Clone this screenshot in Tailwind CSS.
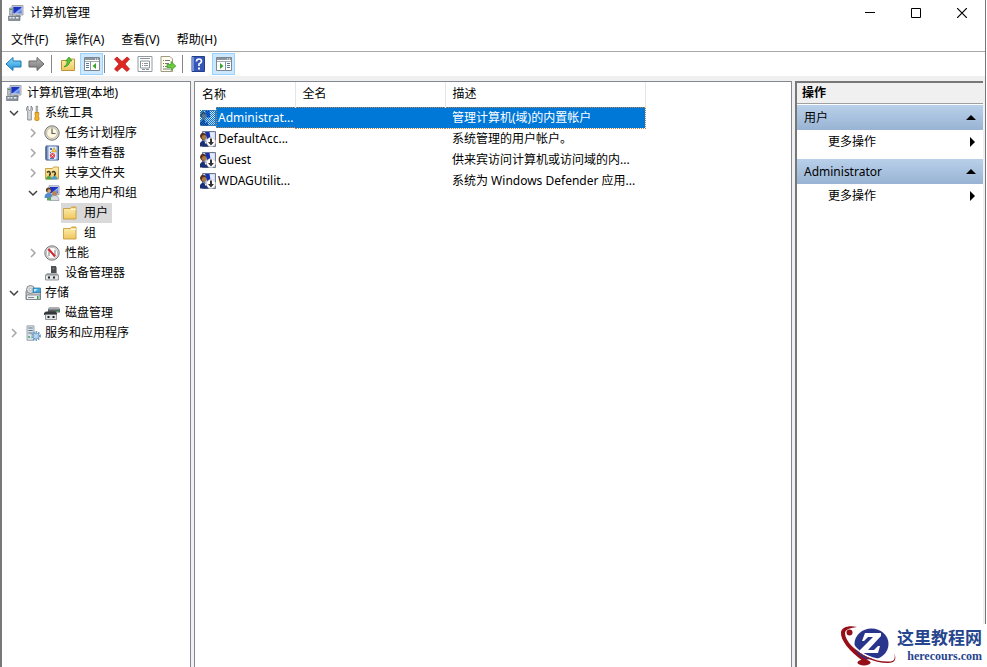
<!DOCTYPE html>
<html lang="zh-CN">
<head>
<meta charset="utf-8">
<meta name="viewport" content="width=device-width, initial-scale=1">
<title>计算机管理</title>
<script src="https://cdn.jsdelivr.net/npm/@tailwindcss/browser@4"></script>
</head>
<body class="h-screen overflow-hidden bg-white font-['Noto_Sans','Noto_Sans_CJK_SC',sans-serif] text-[12px] leading-[20px] text-black">

<svg class="absolute size-0" aria-hidden="true">
  <defs>
    <linearGradient id="gBlue" x1="0" y1="0" x2="1" y2="1"><stop offset="0" stop-color="#1c2fb8"/><stop offset=".5" stop-color="#1b35c8"/><stop offset=".6" stop-color="#8fb0f2"/><stop offset="1" stop-color="#3c5fd8"/></linearGradient>
    <linearGradient id="gFolder" x1="0" y1="0" x2="0" y2="1"><stop offset="0" stop-color="#fdeeb0"/><stop offset="1" stop-color="#efc75e"/></linearGradient>
    <linearGradient id="gArrow" x1="0" y1="0" x2="0" y2="1"><stop offset="0" stop-color="#8fdcff"/><stop offset="1" stop-color="#1b8fd6"/></linearGradient>
    <linearGradient id="gGray" x1="0" y1="0" x2="0" y2="1"><stop offset="0" stop-color="#b5b5b5"/><stop offset="1" stop-color="#777777"/></linearGradient>
    <pattern id="dither" width="2" height="2" patternUnits="userSpaceOnUse"><path d="M0 0h1v1H0zM1 1h1v1H1z" fill="#0078d7"/></pattern>
  </defs>
  <symbol id="computer" viewBox="0 0 16 16">
    <path d="M4 .5h11v9.500H4z" fill="#d9dce2" stroke="#8b8f98" stroke-width=".8"/>
    <path d="M5.300 1.800h8.400v6.700H5.300z" fill="url(#gBlue)"/>
    <path d="M8 10h4l1 2H7z" fill="#9aa0aa"/>
    <path d="M1.500 3h3v7h-3z" fill="#b9c0ca" stroke="#77808c" stroke-width=".6"/>
    <path d="M.5 11h11.500v4.500H.5z" fill="#87909b" stroke="#5e6670" stroke-width=".6"/>
    <path d="M1.500 12h2v1.500h-2zM4.500 12h2v1.500h-2zM8 12h2.500v1.500H8z" fill="#e9edf1"/>
    <path d="M2 4h2v1H2z" fill="#38a83c"/>
  </symbol>
  <symbol id="tools" viewBox="0 0 16 16">
    <path d="M3 1v3.500l1.500 1L6 4.500V1c2 1 2 4.500.3 5.800V15H2.700V6.800C1 5.500 1 2 3 1z" fill="#d7d9dc" stroke="#74777c" stroke-width=".8"/>
    <path d="M11 1h1.600v7H11z" fill="#b6babf" stroke="#777" stroke-width=".5"/>
    <path d="M10 7.500h3.800V10l-.7 1 .9 1.500v2.300l-1 .7h-2.200l-1-.7v-2.300l.8-1.500-.6-1z" fill="#f3b229" stroke="#c17a0a" stroke-width=".7"/>
  </symbol>
  <symbol id="clock" viewBox="0 0 16 16">
    <circle cx="8" cy="8" r="7.200" fill="#dcdad2" stroke="#77756e"/>
    <circle cx="8" cy="8" r="5.400" fill="#fff6dc" stroke="#b6b2a0" stroke-width=".8"/>
    <path d="M8 3.500V8.500h3.500" fill="none" stroke="#51606f" stroke-width="1.200"/>
  </symbol>
  <symbol id="event" viewBox="0 0 16 16">
    <path d="M2 1h12.500v14H2z" fill="#7fa0d8" stroke="#3e5c96"/>
    <path d="M4.500 1.500h8v13h-8z" fill="#e6edf9"/>
    <path d="M6 3h2v2H6zM6 7h1v1H6zM6 13h4v1H6z" fill="#5377bd"/>
    <path d="M10 2.500l2.500 4.500h-5z" fill="#f5c842" stroke="#b88a18" stroke-width=".5"/>
    <circle cx="8.500" cy="10.500" r="2.600" fill="#e04655"/><path d="M7.500 9.500l2 2m0-2l-2 2" stroke="#fff" stroke-width=".8"/>
    <path d="M1 3h2M1 5h2M1 7h2M1 9h2M1 11h2M1 13h2" stroke="#555"/>
  </symbol>
  <symbol id="folder" viewBox="0 0 16 16">
    <path d="M1.500 3.500h7l1-1.500h4.500v12H1.500z" fill="url(#gFolder)" stroke="#c79b3d" stroke-width=".9"/>
    <path d="M9 4.500h5" stroke="#fff7cf"/><path d="M10 2.500h3" stroke="#e3a83d"/>
  </symbol>
  <symbol id="shared" viewBox="0 0 16 16">
    <path d="M1.500 3.500h7l1-1.500h5v12h-13z" fill="url(#gFolder)" stroke="#c79b3d" stroke-width=".9"/>
    <path d="M3 7.500q2-2 3 0t-1 3M8 7.500q2-2 3 0t-1 3" fill="none" stroke="#3f3b23" stroke-width="1.500"/>
    <path d="M2 14.500q0-3.500 3-3.500t3 3.500z" fill="#4ea454"/><path d="M7.500 14.500q0-3.500 3-3.500t3 3.500z" fill="#4c9ecb"/>
  </symbol>
  <symbol id="users" viewBox="0 0 16 16">
    <path d="M5 .8h10v9H5z" fill="#dce2ee" stroke="#7e8ba6" stroke-width=".8"/><path d="M6 2h8v6.500H6z" fill="url(#gBlue)"/>
    <circle cx="4.500" cy="5" r="2.600" fill="#604424"/><circle cx="5.200" cy="6" r="1.800" fill="#d9a878"/>
    <path d="M.5 13q0-5 4-5t4 5z" fill="#5289cf"/>
    <circle cx="10.500" cy="8.500" r="2.500" fill="#b98652"/><path d="M6 15.500q0-5 4.500-5t4.500 5z" fill="#d8dde1" stroke="#7c8790" stroke-width=".6"/>
    <path d="M3 12.500h4v3H3z" fill="#5da35d"/>
  </symbol>
  <symbol id="perf" viewBox="0 0 16 16">
    <circle cx="8" cy="8" r="7.200" fill="#deded9" stroke="#777"/><circle cx="8" cy="8" r="5.600" fill="#fff" stroke="#aaa" stroke-width=".7"/>
    <path d="M5 11V5l6 6V5" fill="none" stroke="#555" stroke-width=".8"/><path d="M4.500 4l6.500 7.500" stroke="#d2222b" stroke-width="2"/>
  </symbol>
  <symbol id="device" viewBox="0 0 16 16">
    <path d="M7 1h5v8H7z" fill="#4a4d50"/><path d="M8.500 2.500h2v2h-2z" fill="#777"/><path d="M12 2h1v7h-1z" fill="#999"/>
    <path d="M3 8h10l1.500 2H1.500z" fill="#aab0b3"/><path d="M1.500 10h13v5h-13z" fill="#e2e5e6" stroke="#787e82" stroke-width=".8"/>
    <path d="M4 11.500h2v2H4zM9 11.500h2v2H9z" fill="#222"/>
  </symbol>
  <symbol id="storage" viewBox="0 0 16 16">
    <path d="M1 6l2-2h10l2.500 2v8.500H1z" fill="#c7cbd0" stroke="#666d75" stroke-width=".8"/>
    <circle cx="5.500" cy="4.500" r="4" fill="#d9dde1" stroke="#888"/><circle cx="5.500" cy="4.500" r="1.200" fill="#fff" stroke="#888" stroke-width=".5"/>
    <path d="M8 3h7.500v4.500H8z" fill="#42a6dd" stroke="#28709b" stroke-width=".7"/><path d="M9 4h4l-3 2.500H9z" fill="#bce9ff"/>
    <path d="M1.500 10h13.500v4.500H1.500z" fill="#eceff1" stroke="#6d747c" stroke-width=".7"/><path d="M3 12.500h6" stroke="#888"/><path d="M12 11h1.500v3H12z" fill="#28a745"/>
  </symbol>
  <symbol id="disk" viewBox="0 0 16 16">
    <path d="M5 2.500h10l1 2v3H4v-3z" fill="#5c6064"/><path d="M5 3h10v1.500H4.500z" fill="#a8adb1"/>
    <path d="M2 6.500h9l2 1.500v2H0V8z" fill="#33373a"/><path d="M1.500 9.500h11v5h-11z" fill="#e2e5e6" stroke="#777d81" stroke-width=".8"/>
    <path d="M3.500 11h2v2h-2zM8.500 11h2v2h-2z" fill="#222"/><path d="M12.500 6h2v1h-2z" fill="#37c44a"/>
  </symbol>
  <symbol id="services" viewBox="0 0 16 16">
    <path d="M2 .8h7v14.500H2z" fill="#dbe2e8" stroke="#8796a4" stroke-width=".8"/><path d="M3.300 3h4.500M3.300 5.500h4.500M3.300 8h4.500" stroke="#5d7488"/><path d="M3.300 11h1.500v2H3.300z" fill="#43a84f"/>
    <circle cx="11" cy="11" r="3.900" fill="none" stroke="#6d9dc7" stroke-width="2" stroke-dasharray="1.500 1"/><circle cx="11" cy="11" r="3" fill="#b9d7ee" stroke="#6797bf" stroke-width=".8"/><circle cx="11" cy="11" r="1.200" fill="#fff" stroke="#6797bf" stroke-width=".5"/>
  </symbol>
  <symbol id="user" viewBox="0 0 16 16">
    <path d="M2.500.5h13v15h-13z" fill="#c3cfee" stroke="#6f7890"/><path d="M8 1.500h6.500v7H8z" fill="#e3eafa"/>
    <path d="M5 1h4.500l1 6-3.500 1z" fill="#1630b0"/>
    <path d="M0 4.500q1-3.500 4-2.500t2 4L4 9.500Q0 8 0 4.500z" fill="#553017"/><circle cx="4.200" cy="6.500" r="2.400" fill="#a87a4a"/>
    <path d="M0 15.500V12q1-2.500 4-2.500t4 4v2z" fill="#1a2f74"/><path d="M4.500 10l1 3 1.500-2z" fill="#fff"/>
  </symbol>
  <symbol id="disabled" viewBox="0 0 16 16">
    <use href="#user"/><circle cx="11" cy="11" r="4.500" fill="#fff" stroke="#c8c8c8" stroke-width=".7"/><path d="M10 7.500h2V11h2l-3 3.500L8 11h2z" fill="#333"/>
  </symbol>
  <symbol id="open" viewBox="0 0 12 12"><path d="M2 4l4 4 4-4" fill="none" stroke="#404040" stroke-width="1.500"/></symbol>
  <symbol id="closed" viewBox="0 0 12 12"><path d="M4 2l4 4-4 4" fill="none" stroke="#a6a6a6" stroke-width="1.500"/></symbol>
  <symbol id="pane" viewBox="0 0 16 16">
    <path d="M.5 1.500h15v13H.5z" fill="#fff" stroke="#7d8790"/><path d="M1 2h14v2H1z" fill="#8b959e"/><path d="M11 2.500h1v1h-1zM13 2.500h1v1h-1z" fill="#fff"/><path d="M1 5.500h14" stroke="#a5adb3"/>
  </symbol>
</svg>

<div class="flex h-full flex-col border-l-2 border-[#777] pr-px">
 <div class="flex min-h-0 flex-1 flex-col border-r border-[#777]">
  <header class="flex h-[26px] shrink-0 items-center pl-[6px]">
    <svg class="size-4"><use href="#computer"/></svg>
    <h1 class="ml-[6px] flex-1">计算机管理</h1>
    <div class="flex h-full">
      <button aria-label="最小化" class="grid w-[46px] place-items-center"><svg class="h-[10px] w-[10px]" viewBox="0 0 10 10"><path d="M0 4.500h10" stroke="#000"/></svg></button>
      <button aria-label="最大化" class="grid w-[46px] place-items-center"><svg class="h-[10px] w-[10px]" viewBox="0 0 10 10"><path d="M.5.5h9v9h-9z" fill="none" stroke="#000"/></svg></button>
      <button aria-label="关闭" class="grid w-[46px] place-items-center"><svg class="h-[10px] w-[10px]" viewBox="0 0 10 10"><path d="M0 0l10 10M10 0L0 10" stroke="#000" stroke-width="1.200"/></svg></button>
    </div>
  </header>

  <nav aria-label="菜单" class="flex h-[26px] shrink-0 items-center gap-[17px] border-b border-[#a8a8a8] pt-[3px] pl-[9px]">
    <button>文件(F)</button><button>操作(A)</button><button>查看(V)</button><button>帮助(H)</button>
  </nav>

  <div role="toolbar" aria-label="工具栏" class="flex h-6 shrink-0 items-center pl-[3px]">
    <button aria-label="后退" class="grid h-[22px] w-[23px] place-items-center pr-[6px]"><svg class="h-4 w-[17px]" viewBox="0 0 17 16"><path d="M1 8l7-6.500V5h8v6H8v3.500z" fill="url(#gArrow)" stroke="#1878b4"/></svg></button>
    <button aria-label="前进" class="grid h-[22px] w-[23px] place-items-center pr-[6px]"><svg class="h-4 w-[17px]" viewBox="0 0 17 16"><path d="M16 8L9 1.500V5H1v6h8v3.500z" fill="url(#gGray)" stroke="#666"/></svg></button>
    <span class="mr-1 h-[18px] w-px bg-[#858585]"></span>
    <button aria-label="上一级" class="grid h-[22px] w-6 place-items-center"><svg class="size-4" viewBox="0 0 16 16"><path d="M1.500 4.500h6l1-1.500h6v11.500h-13z" fill="url(#gFolder)" stroke="#c29238"/><path d="M4 11q3-2 3.500-6H5.500L9 1l3 4h-2q-.5 5-6 6z" fill="#55c52f" stroke="#2d8a18" stroke-width=".6"/></svg></button>
    <button aria-label="显示/隐藏控制台树" aria-pressed="true" class="grid h-[22px] w-[23px] place-items-center border border-[#99d1ff] bg-[#cce8ff]"><svg class="size-4" viewBox="0 0 16 16"><use href="#pane"/><path d="M6.500 5.500v9" stroke="#8a949c"/><path d="M2 7.500h3M2 9.500h3M2 11.500h3" stroke="#56799b"/><path d="M12 7v6L8.500 10z" fill="#3aa52a"/></svg></button>
    <span class="mr-[5px] ml-px h-[18px] w-px bg-[#858585]"></span>
    <button aria-label="删除" class="grid h-[22px] w-[23px] place-items-center"><svg class="size-4" viewBox="0 0 16 16"><path d="M3 1l5 4.500L13 1l2.500 2-4.500 5 4.500 5-2.500 2.500L8 11l-5 4.500L.5 13 5 8 .5 3z" fill="#df2824" stroke="#b31513" stroke-width=".7"/></svg></button>
    <button aria-label="属性" class="grid h-[22px] w-[23px] place-items-center"><svg class="size-4" viewBox="0 0 16 16"><path d="M1 .5h14v15H1z" fill="#fff" stroke="#949a9f"/><path d="M3 2.500h10M3.500 5h9v7h-9zM5 7.500h1M7 7.500h4M5 9.500h1M7 9.500h4M5 13.500h3M9 13.500h3" fill="none" stroke="#8a929a"/></svg></button>
    <button aria-label="导出列表" class="grid h-[22px] w-[23px] place-items-center"><svg class="size-4" viewBox="0 0 16 16"><path d="M1 .5h9l2.500 2.500v12.500H1z" fill="#fffdf0" stroke="#a09a80"/><path d="M3 4.500h1M5 4.500h5M3 7.500h1M5 7.500h4M3 10.500h1M5 10.500h3M3 13h7" stroke="#777"/><path d="M7 8.500h4V5.500l4.800 4.500-4.800 4.500V11.500H7z" fill="#69cc3f" stroke="#379321" stroke-width=".7"/></svg></button>
    <span class="mr-1 ml-[3px] h-[18px] w-px bg-[#858585]"></span>
    <button aria-label="帮助" class="grid h-[22px] w-[25px] place-items-center pr-[3px]"><svg class="size-4" viewBox="0 0 16 16"><path d="M2 .5h12.500v15H2z" fill="#3456b8" stroke="#253e87"/><path d="M2 1h2v14H2z" fill="#7892d8"/><path d="M6.500 5.500q0-2.500 2.500-2.500t2.500 2.200Q11.500 7 9 8v2" fill="none" stroke="#fff" stroke-width="1.700"/><path d="M8 11.500h2v2H8z" fill="#fff"/></svg></button>
    <button aria-label="显示/隐藏操作窗格" aria-pressed="true" class="grid h-[22px] w-[23px] place-items-center border border-[#99d1ff] bg-[#cce8ff]"><svg class="size-4" viewBox="0 0 16 16"><use href="#pane"/><path d="M9.500 5.500v9" stroke="#8a949c"/><path d="M11 7.500h3M11 9.500h3M11 11.500h3" stroke="#56799b"/><path d="M4 7v6L7.500 10z" fill="#3aa52a"/></svg></button>
  </div>

  <div class="flex min-h-0 flex-1 gap-[3px] bg-[#f0f0f0] pt-[5px] pr-[2px]">
    <nav aria-label="控制台树" class="w-[189px] shrink-0 border-t border-r border-[#828790] bg-white pt-px">
      <ul class="whitespace-nowrap">
        <li><button class="flex h-5 items-center pl-[4px]"><svg class="mr-[5px] size-4"><use href="#computer"/></svg>计算机管理(本地)</button></li>
        <li><button aria-expanded="true" class="flex h-5 items-center pl-[6px]"><svg class="mr-[5px] size-3"><use href="#open"/></svg><svg class="mr-[4px] size-4"><use href="#tools"/></svg>系统工具</button>
          <ul class="pl-[25px]">
            <li><button aria-expanded="false" class="flex h-5 items-center"><svg class="mr-[5px] size-3"><use href="#closed"/></svg><svg class="mr-[5px] size-4"><use href="#clock"/></svg>任务计划程序</button></li>
            <li><button aria-expanded="false" class="flex h-5 items-center"><svg class="mr-[5px] size-3"><use href="#closed"/></svg><svg class="mr-[5px] size-4"><use href="#event"/></svg>事件查看器</button></li>
            <li><button aria-expanded="false" class="flex h-5 items-center"><svg class="mr-[5px] size-3"><use href="#closed"/></svg><svg class="mr-[5px] size-4"><use href="#shared"/></svg>共享文件夹</button></li>
            <li><button aria-expanded="true" class="flex h-5 items-center"><svg class="mr-[5px] size-3"><use href="#open"/></svg><svg class="mr-[5px] size-4"><use href="#users"/></svg>本地用户和组</button>
              <ul class="pl-[34px]">
                <li><button aria-current="true" class="flex h-5 items-center bg-[#d9d9d9] pr-[4px] pl-px"><svg class="mr-[6px] size-4"><use href="#folder"/></svg>用户</button></li>
                <li><button class="flex h-5 items-center pl-px"><svg class="mr-[6px] size-4"><use href="#folder"/></svg>组</button></li>
              </ul>
            </li>
            <li><button aria-expanded="false" class="flex h-5 items-center"><svg class="mr-[5px] size-3"><use href="#closed"/></svg><svg class="mr-[5px] size-4"><use href="#perf"/></svg>性能</button></li>
            <li><button class="flex h-5 items-center pl-[17px]"><svg class="mr-[5px] size-4"><use href="#device"/></svg>设备管理器</button></li>
          </ul>
        </li>
        <li><button aria-expanded="true" class="flex h-5 items-center pl-[6px]"><svg class="mr-[5px] size-3"><use href="#open"/></svg><svg class="mr-[4px] size-4"><use href="#storage"/></svg>存储</button>
          <ul class="pl-[25px]"><li><button class="flex h-5 items-center pl-[17px]"><svg class="mr-[5px] size-4"><use href="#disk"/></svg>磁盘管理</button></li></ul>
        </li>
        <li><button aria-expanded="false" class="flex h-5 items-center pl-[6px]"><svg class="mr-[5px] size-3"><use href="#closed"/></svg><svg class="mr-[4px] size-4"><use href="#services"/></svg>服务和应用程序</button></li>
      </ul>
    </nav>

    <main class="min-w-0 flex-1 border border-b-0 border-[#828790] bg-white">
      <table class="w-[450px] table-fixed border-collapse text-left whitespace-nowrap">
        <colgroup><col class="w-[100px]"><col class="w-[150px]"><col class="w-[200px]"></colgroup>
        <thead>
          <tr class="h-[25px]">
            <th class="border-r border-[#e5e5e5] p-0 pl-[7px] font-normal">名称</th>
            <th class="border-r border-[#e5e5e5] p-0 pl-[7px] font-normal">全名</th>
            <th class="border-r border-[#e5e5e5] p-0 pl-[7px] font-normal">描述</th>
          </tr>
        </thead>
        <tbody>
          <tr class="h-[21px] text-white" aria-selected="true">
            <td class="p-0 pl-[5px]"><div class="flex h-[21px] items-center"><svg class="size-4 shrink-0" viewBox="0 0 16 16"><use href="#user"/><path d="M0 0h16v16H0z" fill="url(#dither)" shape-rendering="crispEdges"/></svg><span class="h-full flex-1 border-y border-l border-dotted border-[#b98350] bg-[#0078d7] pl-px leading-[19px]">Administrat...</span></div></td>
            <td class="border-y border-dotted border-[#b98350] bg-[#0078d7] p-0"></td>
            <td class="border-y border-r border-dotted border-[#b98350] bg-[#0078d7] py-0 pl-[7px]">管理计算机(域)的内置帐户</td>
          </tr>
          <tr class="h-[21px]"><td class="p-0 pl-[5px]"><div class="flex items-center gap-[2px]"><svg class="size-4 shrink-0"><use href="#disabled"/></svg>DefaultAcc...</div></td><td></td><td class="py-0 pl-[7px]">系统管理的用户帐户。</td></tr>
          <tr class="h-[21px]"><td class="p-0 pl-[5px]"><div class="flex items-center gap-[2px]"><svg class="size-4 shrink-0"><use href="#disabled"/></svg>Guest</div></td><td></td><td class="py-0 pl-[7px]">供来宾访问计算机或访问域的内...</td></tr>
          <tr class="h-[21px]"><td class="p-0 pl-[5px]"><div class="flex items-center gap-[2px]"><svg class="size-4 shrink-0"><use href="#disabled"/></svg>WDAGUtilit...</div></td><td></td><td class="py-0 pl-[7px]">系统为 Windows Defender 应用...</td></tr>
        </tbody>
      </table>
    </main>

    <aside aria-label="操作" class="w-[188px] shrink-0 border-t-2 border-l-2 border-[#777] bg-white">
      <h2 class="h-[21px] border-b border-[#a0a0a0] bg-[#f0f0f0] pl-[5px] font-bold">操作</h2>
      <section class="mb-[5px] pt-px">
        <button aria-expanded="true" class="flex h-[25px] w-full items-center justify-between bg-linear-to-b from-[#b9d0ea] to-[#98b3d3] pr-[7px] pl-[7px]">用户<svg class="h-[5px] w-[10px]" viewBox="0 0 10 5"><path d="M0 5l5-5 5 5z"/></svg></button>
        <button class="flex h-6 w-full items-center justify-between pr-[8px] pl-[31px]">更多操作<svg class="h-[10px] w-[5px]" viewBox="0 0 5 10"><path d="M0 0l5 5-5 5z"/></svg></button>
      </section>
      <section>
        <button aria-expanded="true" class="flex h-[25px] w-full items-center justify-between bg-linear-to-b from-[#b9d0ea] to-[#98b3d3] pr-[7px] pl-[7px]">Administrator<svg class="h-[5px] w-[10px]" viewBox="0 0 10 5"><path d="M0 5l5-5 5 5z"/></svg></button>
        <button class="flex h-6 w-full items-center justify-between pr-[8px] pl-[31px]">更多操作<svg class="h-[10px] w-[5px]" viewBox="0 0 5 10"><path d="M0 0l5 5-5 5z"/></svg></button>
      </section>
    </aside>
  </div>
 </div>
</div>

<a href="#" class="absolute right-0 bottom-0 flex h-[43px] items-start bg-white pr-[5px] text-[#26458f]">
  <svg class="h-[43px] w-[58px]" viewBox="-2 0 58 43" aria-hidden="true">
    <path d="M16 3C8 1 1 3 0 8c-1 8 9 20 22 29l6-2C15 28 4 17 4 9c0-3 4-5 12-6z" fill="#960f18"/>
    <circle cx="8.500" cy="8.500" r="3" fill="#960f18"/>
    <ellipse cx="30.500" cy="20" rx="17" ry="15.500" fill="#29348c"/>
    <path d="M12 21c7 9 20 15 36 16" fill="none" stroke="#fff" stroke-width="2"/>
    <path d="M10 21c10 11 22 18 37 18 7 0 9-4 6-10 2 6 0 8.500-5 8.500C34 38 21 32 10 21z" fill="#960f18"/>
    <ellipse cx="23" cy="38.500" rx="6.500" ry="3" fill="#960f18"/>
    <path d="M24 9h16v3L27 26h6l4-4h2l-2 7H19v-3L32 13h-5l-4 4h-2z" fill="#fff"/>
  </svg>
  <span class="flex flex-col items-end">
    <span class="font-['Noto_Sans_CJK_SC',sans-serif] text-[17px] leading-[25px] font-bold">这里教程网</span>
    <span class="font-['Liberation_Serif',serif] text-[12px] leading-[14px] font-bold">herecours.com</span>
  </span>
</a>
</body>
</html>
